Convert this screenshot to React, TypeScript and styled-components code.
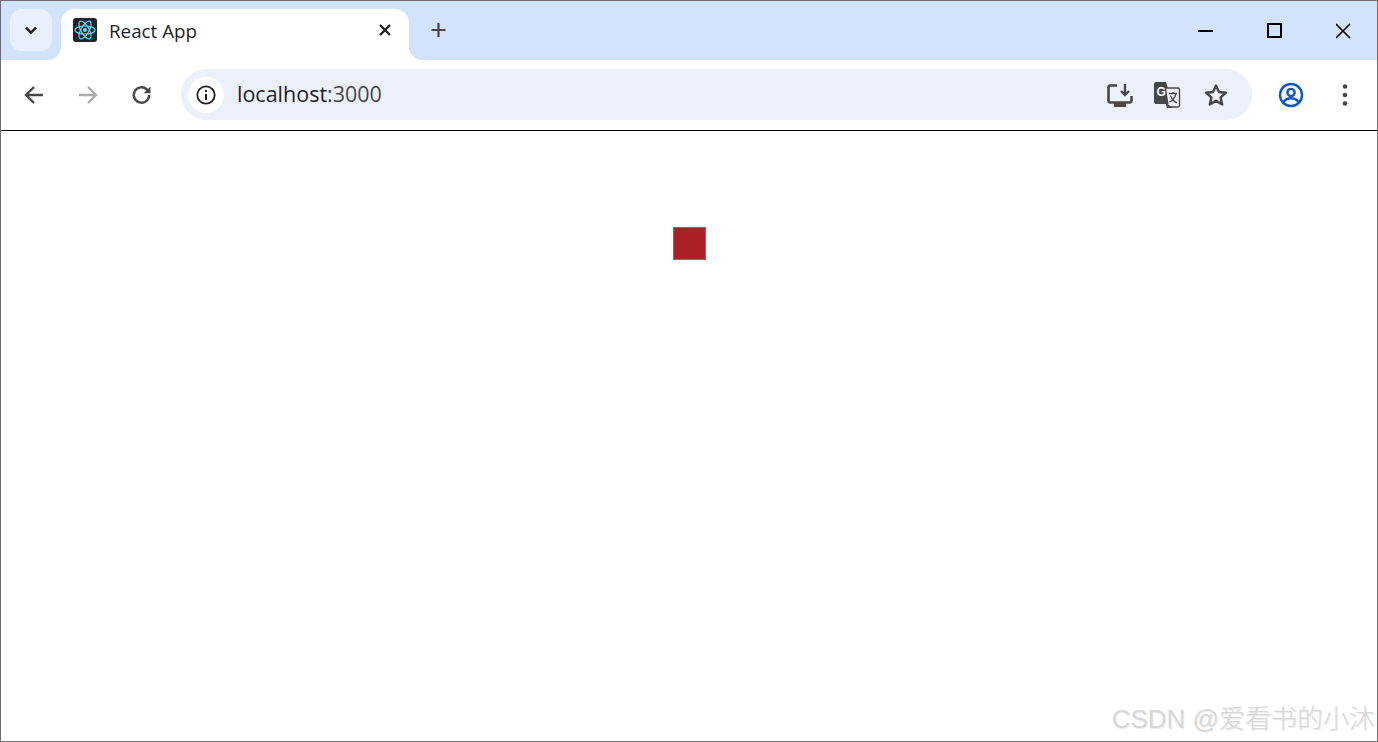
import React from 'react';
import styled, { createGlobalStyle } from 'styled-components';

const GlobalStyle = createGlobalStyle`
	html, body {
		margin: 0;
		padding: 0;
		background: #fff;
	}
	* {
		box-sizing: border-box;
	}
`;

const ReactLogo = () => (
	<svg width='24' height='24' viewBox='0 0 24 24'>
		<rect width='24' height='24' rx='3' fill='#20232a' />
		<g fill='none' stroke='#61dafb' strokeWidth='1.2'>
			<ellipse cx='12' cy='12' rx='10' ry='4' />
			<ellipse cx='12' cy='12' rx='10' ry='4' transform='rotate(60 12 12)' />
			<ellipse cx='12' cy='12' rx='10' ry='4' transform='rotate(120 12 12)' />
		</g>
		<circle cx='12' cy='12' r='2' fill='#61dafb' />
	</svg>
);

const App = () => (
	<Window>
		<GlobalStyle />
		<TabStrip>
			<TabSearch>
				<svg width='16' height='16' viewBox='0 0 16 16' fill='none' stroke='#1f1f1f' strokeWidth='2.4'>
					<path d='M3 5.600 8 10.600l5-5' />
				</svg>
			</TabSearch>
			<Tab>
				<ReactLogo />
				<TabTitle>React App</TabTitle>
				<svg width='14' height='14' viewBox='0 0 14 14' stroke='#1f1f1f' strokeWidth='2.4'>
					<path d='M2 2l10 10M12 2 2 12' />
				</svg>
			</Tab>
			<NewTab>
				<svg width='16' height='16' viewBox='0 0 16 16' stroke='#474747' strokeWidth='2.2'>
					<path d='M7.500 1v14M.5 8h14' />
				</svg>
			</NewTab>
			<WindowControls>
				<WindowButton>
					<svg width='16' height='16' viewBox='0 0 16 16' stroke='#000' strokeWidth='2'>
						<path d='M0 8h15' />
					</svg>
				</WindowButton>
				<WindowButton>
					<svg width='16' height='16' viewBox='0 0 16 16' fill='none' stroke='#000' strokeWidth='2'>
						<rect x='1' y='1' width='13' height='13' />
					</svg>
				</WindowButton>
				<WindowButton>
					<svg width='16' height='16' viewBox='0 0 16 16' stroke='#000' strokeWidth='1.6'>
						<path d='M0 1l14 14M14 1 0 15' />
					</svg>
				</WindowButton>
			</WindowControls>
		</TabStrip>
		<Toolbar>
			<NavButtons>
				<NavButton>
					<svg width='24' height='24' viewBox='0 0 24 24' fill='none' stroke='#474747' strokeWidth='2.4'>
						<path d='M21 12H4M12 4l-8 8 8 8' />
					</svg>
				</NavButton>
				<NavButton>
					<svg width='24' height='24' viewBox='0 0 24 24' fill='none' stroke='#ababab' strokeWidth='2.4'>
						<path d='M3 12h17M12 4l8 8-8 8' />
					</svg>
				</NavButton>
				<NavButton>
					<svg width='24' height='24' viewBox='0 0 24 24' fill='none'>
						<path d='M19.200 12a7.700 7.700 0 1 1-2.400-5.600L19 8.600' stroke='#474747' strokeWidth='2.400' />
						<path d='M20.500 3.500v6.800h-6.800z' fill='#474747' />
					</svg>
				</NavButton>
			</NavButtons>
			<Omnibox>
				<SiteInfo>
					<svg width='20' height='20' viewBox='0 0 20 20' fill='none'>
						<circle cx='10' cy='10' r='8.700' stroke='#1f1f1f' strokeWidth='1.800' />
						<path d='M9 9h2v6H9zM9 5h2v2H9z' fill='#1f1f1f' />
					</svg>
				</SiteInfo>
				<Url>
					localhost<UrlPort>:3000</UrlPort>
				</Url>
				<OmniboxActions>
					<svg width='28' height='28' viewBox='0 0 28 28' fill='none'>
						<path d='M11 4.500H4.500a2 2 0 0 0-2 2v13a2 2 0 0 0 2 2h19a2 2 0 0 0 2-2V15' stroke='#474747' strokeWidth='2.600' />
						<path d='M8 22h12v4H8z' fill='#474747' />
						<path d='M19 3v11M15 10l4 4 4-4' stroke='#474747' strokeWidth='2.400' />
					</svg>
					<TranslateIcon width='28' height='28' viewBox='0 0 28 28'>
						<path d='M3 1h10l7 22H3a2 2 0 0 1-2-2V3a2 2 0 0 1 2-2z' fill='#474747' />
						<path d='M13 7h12a1.500 1.500 0 0 1 1.500 1.500v16A1.500 1.500 0 0 1 25 26h-9' fill='#ebf0f9' stroke='#474747' strokeWidth='1.400' />
						<path d='M12 21l2 6h6z' fill='#474747' />
						<text x='3.500' y='15' fontFamily='Liberation Sans, sans-serif' fontWeight='700' fontSize='12' fill='#fff'>G</text>
						<path d='M16 12.500h8M20 11V12.500M23 12.500c-1 4-3.500 7-6.500 8.500M17.500 14.500c1 3 3.500 6 6.500 7.500' fill='none' stroke='#474747' strokeWidth='1.300' />
					</TranslateIcon>
					<svg width='26' height='26' viewBox='0 0 26 26' fill='none' stroke='#474747' strokeWidth='2.400' strokeLinejoin='round'>
						<path d='M13 3.500l2.900 6.500 7.100.7-5.400 4.700 1.600 7-6.200-3.700-6.200 3.700 1.600-7L3 10.700l7.100-.7z' />
					</svg>
				</OmniboxActions>
			</Omnibox>
			<ToolbarEnd>
				<svg width='26' height='26' viewBox='0 0 26 26' fill='none' stroke='#0b57d0' strokeWidth='2.400'>
					<circle cx='13' cy='13' r='11' />
					<circle cx='13' cy='10.500' r='3.600' />
					<path d='M5.500 20c2-2.600 4.700-3.700 7.500-3.700s5.500 1.100 7.500 3.700' />
				</svg>
				<svg width='6' height='24' viewBox='0 0 6 24' fill='#474747'>
					<circle cx='3' cy='3.500' r='2.300' />
					<circle cx='3' cy='12' r='2.300' />
					<circle cx='3' cy='20.500' r='2.300' />
				</svg>
			</ToolbarEnd>
		</Toolbar>
		<Page>
			<RedSquare />
			<Watermark>CSDN @爱看书的小沐</Watermark>
		</Page>
	</Window>
);

export default App;

const Window = styled.div`
	width: 1378px;
	height: 742px;
	display: flex;
	flex-direction: column;
	border: 1px solid #6e6e6e;
	overflow: hidden;
	background: #fff;
`;
const TabStrip = styled.div`
	height: 59px;
	flex: none;
	display: flex;
	align-items: flex-start;
	padding: 8px 0 0 9px;
	background: #d3e3fd;
`;
const TabSearch = styled.div`
	width: 42px;
	height: 42px;
	display: flex;
	align-items: center;
	justify-content: center;
	border-radius: 12px;
	background: #e8f0fe;
`;
const Tab = styled.div`
	position: relative;
	width: 348px;
	height: 51px;
	margin-left: 9px;
	display: flex;
	align-items: flex-start;
	padding: 9px 17px 0 12px;
	border-radius: 14px 14px 0 0;
	background: #fff;

	> svg:last-child {
		margin-top: 5px;
	}

	&::before,
	&::after {
		content: '';
		position: absolute;
		bottom: 0;
		width: 14px;
		height: 14px;
	}
	&::before {
		left: -14px;
		background: radial-gradient(circle at 0 0, transparent 14px, #fff 14.5px);
	}
	&::after {
		right: -14px;
		background: radial-gradient(circle at 100% 0, transparent 14px, #fff 14.5px);
	}
`;
const TabTitle = styled.span`
	flex: 1;
	margin-left: 12px;
	font-family: 'Open Sans', sans-serif;
	font-size: 18.8px;
	line-height: 26px;
	color: #1f1f1f;
`;
const NewTab = styled.div`
	width: 16px;
	height: 16px;
	margin: 13px 0 0 22px;
	display: flex;
`;
const WindowControls = styled.div`
	margin-left: auto;
	display: flex;
	padding: 14px 25px 0 0;
	gap: 53px;
`;
const WindowButton = styled.div`
	width: 16px;
	height: 16px;
	display: flex;
`;
const Toolbar = styled.div`
	position: relative;
	height: 71px;
	flex: none;
	display: flex;
	align-items: center;
	padding: 0 29px 1px 21px;
	border-radius: 14px 14px 0 0;
	border-bottom: 1px solid #000;
	background: #fff;
`;
const NavButtons = styled.div`
	display: flex;
	gap: 30px;
`;
const NavButton = styled.div`
	width: 24px;
	height: 24px;
	display: flex;
`;
const Omnibox = styled.div`
	width: 1071px;
	height: 51px;
	margin-left: 27px;
	display: flex;
	align-items: center;
	padding: 0 23px 0 7px;
	border-radius: 26px;
	background: #ebf0f9;
`;
const SiteInfo = styled.div`
	width: 36px;
	height: 36px;
	display: flex;
	align-items: center;
	justify-content: center;
	border-radius: 50%;
	background: #fff;
`;
const Url = styled.span`
	margin: 0 0 2px 13px;
	font-family: 'Open Sans', sans-serif;
	font-size: 21.5px;
	color: #1f1f1f;
`;
const UrlPort = styled.span`
	color: #474747;
`;
const OmniboxActions = styled.div`
	margin-left: auto;
	display: flex;
	align-items: center;
	gap: 20px;
`;
const TranslateIcon = styled.svg`
	margin: 0 2px 0 -1px;
`;
const ToolbarEnd = styled.div`
	margin-left: auto;
	display: flex;
	align-items: center;
	gap: 38px;
`;
const Page = styled.main`
	position: relative;
	flex: 1;
	padding-top: 96px;
	background: #fff;
`;
const RedSquare = styled.div`
	width: 33px;
	height: 33px;
	margin: 0 auto;
	background: #ad1f27;
	box-shadow: inset 0 0 0 1px #c2555b;
`;
const Watermark = styled.div`
	position: absolute;
	right: 2px;
	bottom: 5px;
	font-family: 'Liberation Sans', 'Noto Sans CJK SC', sans-serif;
	font-size: 26px;
	font-weight: 300;
	line-height: 34px;
	color: #d8d8d8;
	text-shadow: 1px 1px 0 #ececec;
	white-space: nowrap;
`;
